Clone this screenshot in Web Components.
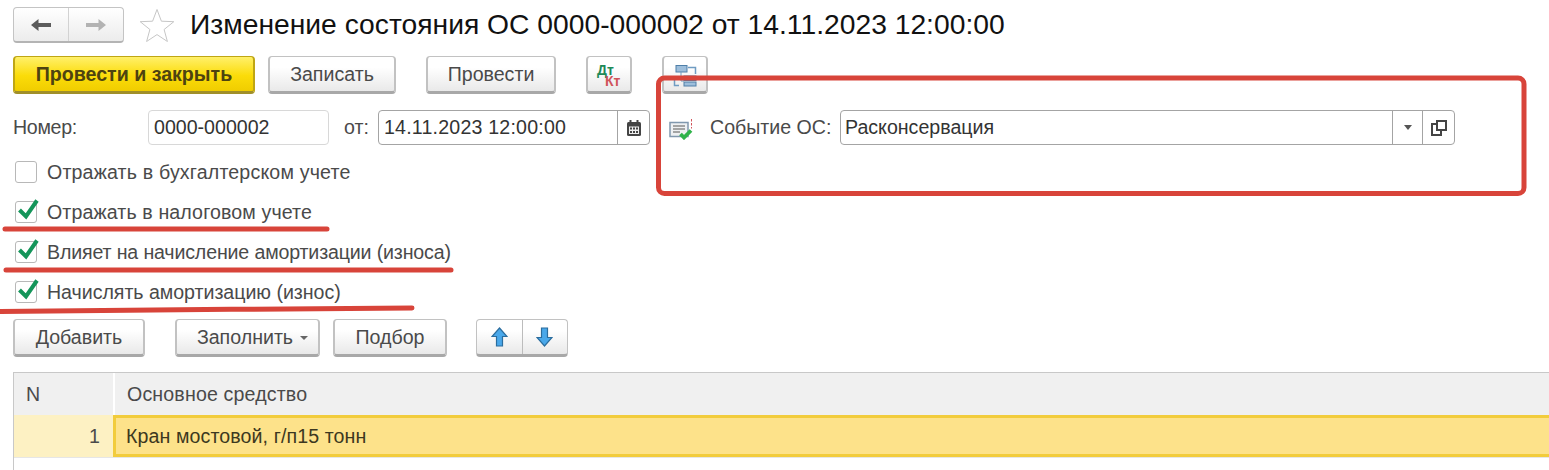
<!DOCTYPE html>
<html lang="ru">
<head>
<meta charset="utf-8">
<title>Изменение состояния ОС</title>
<style>
  html,body{margin:0;background:#fff;overflow:hidden}
  body{font:19.600px "Liberation Sans",Arial,sans-serif;color:#4a4a4a}
  .w-add{width:132px}.w-fill{width:145px;margin-left:30px}.w-pick{width:114px;margin-left:13px}
  .w-post{width:242px}.w-save{width:128px;margin-left:13px}.w-prov{width:130px;margin-left:30px}
  .w-ico{width:46px;margin-left:30px}
</style>
</head>
<body>
<doc-form>
  <form-head slot="head">Изменение состояния ОС 0000-000002 от 14.11.2023 12:00:00</form-head>

  <form-bar slot="bar1" top="13">
    <ui-btn class="w-post" primary>Провести и закрыть</ui-btn>
    <ui-btn class="w-save">Записать</ui-btn>
    <ui-btn class="w-prov">Провести</ui-btn>
    <ui-btn class="w-ico"><dt-kt></dt-kt></ui-btn>
    <ui-btn class="w-ico">
      <svg width="24" height="24" viewBox="0 0 24 24" fill="none">
        <path d="M15 4.500h7.500V11M1.500 17v5.500H6" stroke="#6f9cc2" stroke-width="1.500"/>
        <rect x="3" y="2.500" width="11" height="6.500" fill="#9dbedb" stroke="#4f7fa8"/>
        <path d="M8 9v9h3" stroke="#6f9cc2"/>
        <rect x="11" y="13" width="12" height="4.500" fill="#9dbedb" stroke="#4f7fa8"/>
        <rect x="11" y="19" width="12" height="4" fill="#9dbedb" stroke="#4f7fa8"/>
      </svg>
    </ui-btn>
  </form-bar>

  <field-row slot="fields"></field-row>

  <form-checks slot="checks">
    <ui-check style="letter-spacing:.17px">Отражать в бухгалтерском учете</ui-check>
    <ui-check style="letter-spacing:.12px" checked>Отражать в налоговом учете</ui-check>
    <ui-check style="letter-spacing:-.15px" checked>Влияет на начисление амортизации (износа)</ui-check>
    <ui-check style="letter-spacing:-.03px" checked>Начислять амортизацию (износ)</ui-check>
  </form-checks>

  <form-bar slot="bar2" top="7">
    <ui-btn class="w-add">Добавить</ui-btn>
    <ui-btn class="w-fill" caret>Заполнить</ui-btn>
    <ui-btn class="w-pick">Подбор</ui-btn>
    <move-btns></move-btns>
  </form-bar>

  <os-table slot="table"></os-table>
</doc-form>
<red-marks></red-marks>

<script>
// every element: own shadow root, markup + style set from a string
function make(tag, html, setup){
  const tpl = document.createElement('template');
  tpl.innerHTML = html;
  customElements.define(tag, class extends HTMLElement{
    constructor(){
      super();
      this.attachShadow({mode:'open'}).appendChild(tpl.content.cloneNode(true));
    }
    connectedCallback(){ if(setup) setup(this); }
  });
}

make('doc-form', `
  <style>:host{display:flex;flex-direction:column;padding:7px 0 0 13px;height:470px;box-sizing:border-box}</style>
  <slot name="head"></slot><slot name="bar1"></slot><slot name="fields"></slot>
  <slot name="checks"></slot><slot name="bar2"></slot><slot name="table"></slot>
`);

make('form-head', `
  <style>
    :host{display:flex;align-items:center;height:36px}
    .nav{width:111px;height:36px;box-sizing:border-box;display:flex;border:1px solid #c4c4c4;border-bottom:2px solid #b4b4b4;border-radius:4px;background:linear-gradient(#fff,#ececec)}
    .nav span{flex:1;display:flex;align-items:center;justify-content:center}
    .nav span+span{border-left:1px solid #d2d2d2}
    .star{margin:0 15px 0 15px;flex:none}
    h1{margin:0;font:400 28.250px "Liberation Sans",Arial,sans-serif;color:#111;white-space:nowrap;position:relative;top:-1px}
  </style>
  <div class="nav">
    <span><svg width="22" height="14" viewBox="0 0 22 14"><path d="M1 7l7.500-6v4H21v4H8.500v4z" fill="#5c5c5c"/></svg></span>
    <span><svg width="22" height="14" viewBox="0 0 22 14"><path d="M21 7l-7.500-6v4H1v4h12.500v4z" fill="#b3b3b3"/></svg></span>
  </div>
  <svg class="star" width="36" height="34" viewBox="0 0 36 34"><path d="M18 1.500l4.400 11.700 12.400.5-9.700 7.800 3.300 12-10.400-6.900-10.400 6.900 3.300-12-9.700-7.800 12.400-.5z" fill="#fff" stroke="#c6c6c6"/></svg>
  <h1><slot></slot></h1>
`);

make('form-bar', `
  <style>:host{display:flex;height:38px}</style><slot></slot>
`, el => { el.style.marginTop = el.getAttribute('top') + 'px'; });

make('ui-btn', `
  <style>
    :host{display:flex;box-sizing:border-box;height:38px;font-size:19.600px;color:#4a4a4a}
    .b{flex:1;display:flex;align-items:center;justify-content:center;gap:8px;box-sizing:border-box;height:38px;padding-top:1px;
       border:2px solid #c2c2c2;border-top-width:1px;border-bottom:3px solid #a8a8a8;border-radius:4px;background:linear-gradient(#fff 30%,#e9e9e9)}
    :host([primary]) .b{border-color:#bfa614;border-bottom-color:#a08f2a;background:linear-gradient(#fff06a,#fbdc09 55%,#f0cd00);color:#4d4310;font-weight:700}
    .caret{display:none;width:0;height:0;border:4px solid transparent;border-top-color:#666;border-bottom:0;margin-left:-1px}
    :host([caret]) .caret{display:block}
    :host([caret]) .b{padding-left:10px}
  </style>
  <div class="b"><slot></slot><i class="caret"></i></div>
`);

make('dt-kt', `
  <style>
    :host{display:block;width:30px;height:30px;position:relative;font:700 14px/12px "Liberation Sans",Arial,sans-serif}
    b{position:absolute}
    .d{left:3px;top:4px;color:#1f8a58}.k{left:11px;top:15px;color:#d0545a}
  </style>
  <b class="d">Дт</b><b class="k">Кт</b>
`);

make('move-btns', `
  <style>
    :host{display:flex;box-sizing:border-box;width:92px;height:38px;margin-left:29px;border:1px solid #c2c2c2;border-bottom:3px solid #a8a8a8;border-radius:4px;background:linear-gradient(#fff 30%,#e9e9e9)}
    span{flex:1;display:flex;align-items:center;justify-content:center}
    span+span{border-left:1px solid #bcbcbc}
  </style>
  <span><svg width="17" height="20" viewBox="0 0 17 20"><path d="M8.500 1l7.500 8.500h-4.500V19h-6V9.500H1z" fill="#4aa8ea" stroke="#2b6d9e" stroke-width="1.200"/></svg></span>
  <span><svg width="17" height="20" viewBox="0 0 17 20"><path d="M8.500 19L16 10.500h-4.500V1h-6v9.500H1z" fill="#4aa8ea" stroke="#2b6d9e" stroke-width="1.200"/></svg></span>
`);

make('field-row', `
  <style>
    :host{display:flex;align-items:center;height:35px;margin-top:16px;font-size:19.600px;color:#4a4a4a}
    .box{box-sizing:border-box;height:35px;display:flex;align-items:center;border:1px solid #d8d8d8;border-radius:4px;padding-left:5px;color:#333;background:#fff}
    .dark{border-color:#a4a4a4}
    .lbl-no{width:135px;letter-spacing:-.3px}
    .num{width:181px}
    .of{margin-left:15px;width:34px}
    .date{width:272px;padding-left:5px;letter-spacing:.2px}
    .grow{flex:1}
    .cell{align-self:stretch;display:flex;align-items:center;justify-content:center;width:31px;border-left:1px solid #a4a4a4}
    .cell.narrow{width:29px}
    .ev-ico{margin:0 17px 0 19px;flex:none}
    .ev-lbl{width:130px;white-space:nowrap}
    .sel{width:615px;padding-left:4px}
  </style>
  <span class="lbl-no">Номер:</span>
  <div class="box num">0000-000002</div>
  <span class="of">от:</span>
  <div class="box dark date">
    <span class="grow">14.11.2023 12:00:00</span>
    <span class="cell"><svg width="14" height="16" viewBox="0 0 14 16"><rect y="2" width="14" height="14" rx="1.500" fill="#444"/><rect x="2.500" width="2" height="4" fill="#444"/><rect x="9.500" width="2" height="4" fill="#444"/><path d="M2 6.500h10v7.500H2z" fill="#eee"/><path d="M3 7.500h2v2H3zM6 7.500h2v2H6zM9 7.500h2v2H9zM3 11h2v2H3zM6 11h2v2H6zM9 11h2v2H9z" fill="#444"/></svg></span>
  </div>
  <svg class="ev-ico" width="24" height="24" viewBox="0 0 24 24">
    <path d="M22.500 3v2.500M22.500 7v2.500M22.500 11v1.500" stroke="#d0545a" stroke-width="1"/>
    <rect x="1" y="6.500" width="18" height="14" fill="#eef0f2" stroke="#8098ae" stroke-width="1.500"/>
    <path d="M4 10h12M4 13h12M4 16h7" stroke="#8a8a8a" stroke-width="1.300"/>
    <path d="M11.500 18l3.500 3.500 7-7" fill="none" stroke="#2fb34a" stroke-width="3.800"/>
  </svg>
  <span class="ev-lbl">Событие ОС:</span>
  <div class="box dark sel">
    <span class="grow">Расконсервация</span>
    <span class="cell narrow"><svg width="10" height="6" viewBox="0 0 10 6"><path d="M1 0h8L5 5z" fill="#555"/></svg></span>
    <span class="cell"><svg width="16" height="16" viewBox="0 0 16 16" fill="none" stroke="#444" stroke-width="2"><rect x="6" y="1" width="9" height="9"/><path d="M6 4H1v11h9v-4"/></svg></span>
  </div>
`);

make('form-checks', `
  <style>:host{display:block;margin-top:7px}</style><slot></slot>
`);

make('ui-check', `
  <style>
    :host{display:flex;align-items:center;height:40px;font-size:19.600px;color:#4a4a4a;padding-left:2px}
    .c{position:relative;box-sizing:border-box;width:22px;height:22px;margin-right:10px;border:1px solid #b8b8b8;border-radius:3px;background:#fff;flex:none}
    svg{display:none;position:absolute;left:1px;top:-6px}
    :host([checked]) svg{display:block}
  </style>
  <div class="c"><svg width="24" height="24" viewBox="0 0 24 24"><path d="M2.500 14L9 20.500 20 4.500" fill="none" stroke="#14955a" stroke-width="4"/></svg></div>
  <span><slot></slot></span>
`);

make('os-table', `
  <style>
    :host{display:block;flex:1;margin-top:15px;border-left:1px solid #c8c8c8;font-size:19.600px;color:#4a4a4a}
    .r{display:grid;grid-template-columns:99px 1fr}
    .hd{height:43px;box-sizing:border-box;background:#f0f0f0;border-top:1px solid #c8c8c8}
    .hd div{display:flex;align-items:center;padding:0 12px;white-space:nowrap;letter-spacing:.15px}
    .hd div+div{border-left:2px solid #fff}
    .row{height:43px;box-sizing:border-box;border-bottom:1px solid #e6e6e6}
    .n{background:#fdf1c3;display:flex;align-items:center;justify-content:flex-end;padding:1px 13px 0 0;color:#4a4a4a}
    .cur{background:#fde28a;border:3px solid #f2cc3c;border-right:0;display:flex;align-items:center;padding:1px 0 0 10px;color:#3c3820;letter-spacing:.1px}
  </style>
  <div class="r hd"><div>N</div><div>Основное средство</div></div>
  <div class="r row"><div class="n">1</div><div class="cur">Кран мостовой, г/п15 тонн</div></div>
`);

// red pen marks over the form
make('red-marks', `
  <style>:host{position:absolute;left:0;top:0;width:1549px;height:470px;pointer-events:none}</style>
  <svg width="1549" height="470" fill="none" stroke="#d8443a" stroke-width="5" stroke-linecap="round">
    <rect x="658.500" y="78" width="865.500" height="115.500" rx="6"/>
    <path d="M5 229H327M6 270H451"/>
    <path d="M-3 311.500C120 310 280 309 412 308"/>
  </svg>
`);
</script>
</body>
</html>
